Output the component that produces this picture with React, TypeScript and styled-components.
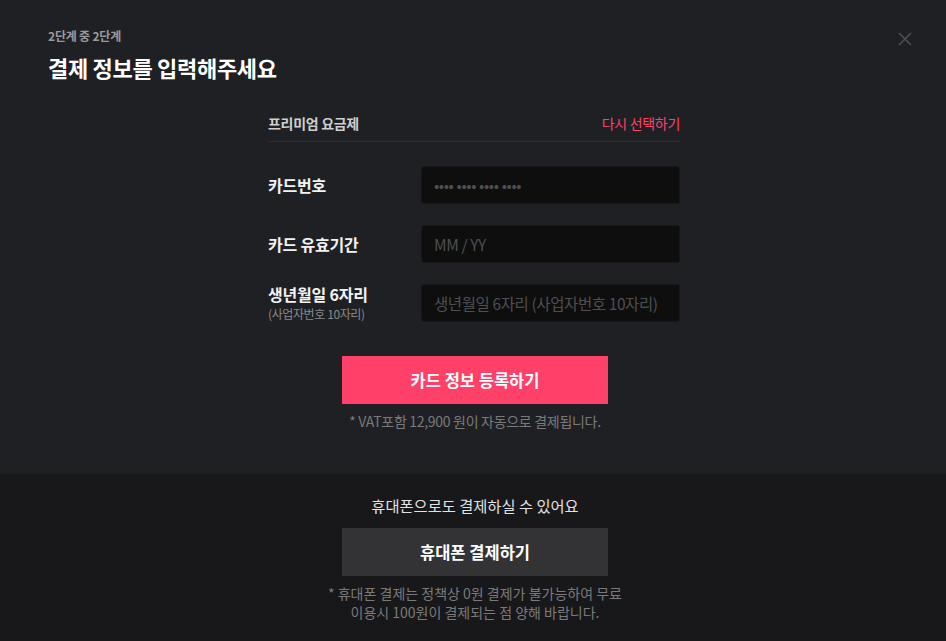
import styled, { createGlobalStyle } from 'styled-components';

const Global = createGlobalStyle`
  html, body {
    margin: 0;
    padding: 0;
    background: #1f2023;
  }
  * { box-sizing: border-box; }
  body {
    font-family: 'Noto Sans CJK KR', 'Noto Sans', sans-serif;
  }
`;

const Modal = styled.div`
  width: 946px;
  height: 641px;
  display: flex;
  flex-direction: column;
  background: #1f2023;
  position: relative;
`;

const Top = styled.section`
  height: 474px;
  padding: 26px 48px 0;
`;

const Step = styled.div`
  font-size: 12px;
  font-weight: 700;
  color: #9a9a9c;
  line-height: 20px;
  letter-spacing: -0.2px;
`;

const Title = styled.h1`
  margin: 6px 0 0;
  font-size: 22px;
  font-weight: 700;
  color: #fff;
  line-height: 30px;
  letter-spacing: -0.3px;
`;

const Close = styled.button`
  position: absolute;
  top: 31px;
  right: 33px;
  width: 16px;
  height: 16px;
  padding: 0;
  border: 0;
  background: none;
  cursor: pointer;
`;

const Form = styled.div`
  width: 412px;
  margin: 23px 0 0 220px;
  display: flex;
  flex-direction: column;
`;

const PlanRow = styled.div`
  display: flex;
  justify-content: space-between;
  align-items: center;
  height: 37px;
  border-bottom: 1px solid #2c2d30;
  font-size: 14px;
  letter-spacing: -0.3px;
`;

const PlanName = styled.span`
  font-weight: 700;
  color: #cfcfd1;
`;

const Reselect = styled.a`
  color: #ff4069;
  cursor: pointer;
`;

const Fields = styled.div`
  display: flex;
  flex-direction: column;
  gap: 21px;
  margin-top: 24px;
`;

const Field = styled.div`
  display: flex;
  align-items: center;
  justify-content: space-between;
`;

const Label = styled.label`
  display: flex;
  flex-direction: column;
  font-size: 16px;
  font-weight: 700;
  color: #f2f2f2;
  line-height: 20px;
  letter-spacing: -0.2px;
`;

const SubLabel = styled.span`
  margin-top: 2px;
  font-size: 12px;
  font-weight: 400;
  color: #8a8a8c;
  line-height: 16px;
  letter-spacing: -0.4px;
`;

const Input = styled.input`
  width: 259px;
  height: 38px;
  padding: 0 10px 0 12px;
  background: #0e0e0f;
  border: 1px solid #18181a;
  border-radius: 3px;
  color: #fff;
  font-family: inherit;
  font-size: 15.5px;
  letter-spacing: -0.4px;
  outline: none;
  &::placeholder {
    color: #4f4f52;
  }
`;

const Action = styled.div<{ $gap?: number }>`
  display: flex;
  flex-direction: column;
  align-items: center;
  margin-top: ${(p) => p.$gap ?? 0}px;
  padding-left: 4px;
`;

const Button = styled.button<{ $variant?: 'primary' | 'secondary' }>`
  width: 266px;
  height: 48px;
  border: 0;
  background: ${(p) => (p.$variant === 'secondary' ? '#333336' : '#ff4069')};
  color: #fff;
  font-family: inherit;
  font-size: 16.5px;
  font-weight: 700;
  cursor: pointer;
`;

const Note = styled.p<{ $tight?: boolean }>`
  margin: 8px 0 0;
  font-size: 14px;
  color: #7a7a7c;
  line-height: 18px;
  text-align: center;
  letter-spacing: ${(p) => (p.$tight ? '-0.3px' : '0')};
`;

const NoteLine = styled.span`
  display: block;
  & + & {
    margin-top: 1px;
  }
`;

const Bottom = styled.section`
  flex: 1;
  background: #18181a;
  display: flex;
  flex-direction: column;
  align-items: center;
  padding: 20px 0 0 4px;
`;

const Lead = styled.p`
  margin: 0 0 12px;
  font-size: 15.3px;
  color: #e2e2e4;
  line-height: 22px;
`;

const App = () => {
  return (
    <>
      <Global />
      <Modal>
        <Top>
          <Step>2단계 중 2단계</Step>
          <Title>결제 정보를 입력해주세요</Title>
          <Close aria-label='닫기'>
            <svg width='16' height='16' viewBox='0 0 16 16'>
              <path d='M2 2L14 14M14 2L2 14' stroke='#4e4f52' strokeWidth='1.6' />
            </svg>
          </Close>
          <Form>
            <PlanRow>
              <PlanName>프리미엄 요금제</PlanName>
              <Reselect>다시 선택하기</Reselect>
            </PlanRow>
            <Fields>
              <Field>
                <Label htmlFor='card'>카드번호</Label>
                <Input id='card' placeholder='•••• •••• •••• ••••' />
              </Field>
              <Field>
                <Label htmlFor='exp'>카드 유효기간</Label>
                <Input id='exp' placeholder='MM / YY' />
              </Field>
              <Field>
                <Label htmlFor='birth'>
                  생년월일 6자리
                  <SubLabel>(사업자번호 10자리)</SubLabel>
                </Label>
                <Input id='birth' placeholder='생년월일 6자리 (사업자번호 10자리)' />
              </Field>
            </Fields>
          </Form>
          <Action $gap={34}>
            <Button>카드 정보 등록하기</Button>
            <Note $tight>* VAT포함 12,900 원이 자동으로 결제됩니다.</Note>
          </Action>
        </Top>
        <Bottom>
          <Lead>휴대폰으로도 결제하실 수 있어요</Lead>
          <Button $variant='secondary'>휴대폰 결제하기</Button>
          <Note>
            <NoteLine>* 휴대폰 결제는 정책상 0원 결제가 불가능하여 무료</NoteLine>
            <NoteLine>이용시 100원이 결제되는 점 양해 바랍니다.</NoteLine>
          </Note>
        </Bottom>
      </Modal>
    </>
  );
};

export default App;
